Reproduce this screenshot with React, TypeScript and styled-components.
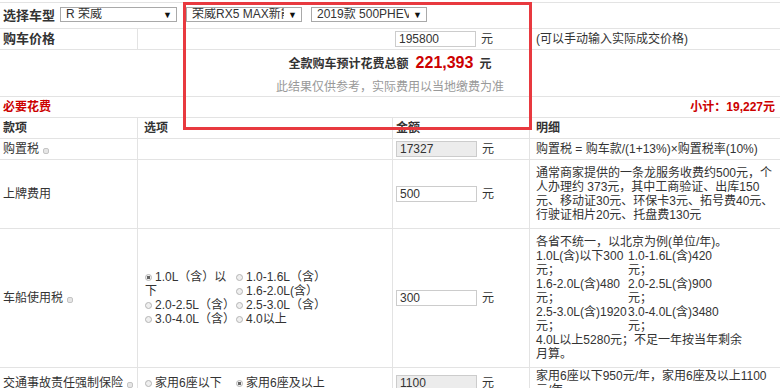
import * as React from "react";
import styled, { createGlobalStyle } from "styled-components";

const GlobalStyle = createGlobalStyle`
  html, body {
    margin: 0;
    padding: 0;
    background: #fff;
  }
  body {
    font-family: "Liberation Sans", "Noto Sans CJK SC", sans-serif;
    font-size: 12px;
    color: #333;
  }
  * {
    box-sizing: border-box;
  }
`;

const LINE = "#e3e3e3";

const Page = styled.div`
  position: relative;
  width: 780px;
  padding-top: 2px;
  overflow: hidden;
`;

const Row = styled.div<{ $height?: number; $top?: boolean }>`
  display: grid;
  grid-template-columns: 137px 255px 137px 1fr;
  border-bottom: 1px solid ${LINE};
  border-top: ${({ $top }) => ($top ? `1px solid ${LINE}` : "none")};
  height: ${({ $height }) => ($height ? `${$height}px` : "auto")};
`;

const Cell = styled.div<{ $line?: boolean; $pad?: number; $span?: boolean }>`
  display: flex;
  align-items: center;
  padding-left: ${({ $pad }) => ($pad !== undefined ? $pad : 3)}px;
  border-left: ${({ $line }) => ($line ? `1px solid ${LINE}` : "none")};
  grid-column: ${({ $span }) => ($span ? "1 / -1" : "auto")};
  line-height: 14px;
  min-width: 0;
`;

const Label = styled.span<{ $size?: number; $red?: boolean }>`
  font-weight: bold;
  font-size: ${({ $size }) => $size || 12}px;
  color: ${({ $red }) => ($red ? "#c00" : "#333")};
`;

const SelectRow = styled.div`
  display: flex;
  align-items: center;
  gap: 9px;
  margin-left: 5px;
`;

const SelectBox = styled.div<{ $width: number }>`
  display: flex;
  align-items: center;
  width: ${({ $width }) => $width}px;
  height: 15px;
  margin-bottom: 2px;
  border: 1px solid #a9a9a9;
  background: #fff;
  padding: 0 4px 0 5px;
  font-size: 12px;
  color: #333;
  white-space: nowrap;
`;

const SelectText = styled.span`
  flex: 1;
  min-width: 0;
  overflow: hidden;
  line-height: 13px;
`;

const Arrow = styled.span`
  flex: none;
  font-size: 9px;
  color: #111;
  margin-left: 4px;
  line-height: 10px;
`;

const Input = styled.input<{ $readOnly?: boolean }>`
  width: 81px;
  height: 16px;
  border: 1px solid #ccc;
  padding: 0 0 0 3px;
  font-family: "Liberation Sans", "Noto Sans CJK SC", sans-serif;
  font-size: 12px;
  color: #333;
  background: ${({ $readOnly }) => ($readOnly ? "#ececec" : "#fff")};
  outline: none;
`;

const Unit = styled.span`
  margin-left: 5px;
`;

const Summary = styled.div`
  grid-column: 1 / -1;
  display: flex;
  flex-direction: column;
  align-items: center;
  padding-top: 4px;
`;

const TotalLine = styled.div`
  display: flex;
  align-items: baseline;
  font-weight: bold;
  height: 22px;
`;

const TotalValue = styled.span`
  color: #c00;
  font-size: 16px;
  margin: 0 6px 0 7px;
`;

const Hint = styled.div`
  color: #999;
  margin-top: 1px;
`;

const Subtotal = styled.span`
  margin-left: auto;
  margin-right: 5px;
  color: #c00;
  font-weight: bold;
`;

const Info = styled.span`
  display: inline-block;
  width: 6px;
  height: 6px;
  margin-left: 4px;
  margin-top: 3px;
  border-radius: 2px;
  border: 1px solid #c4c4c4;
  background: #e6e6e6;
`;

const Options = styled.div`
  display: grid;
  grid-template-columns: 91px 91px;
  line-height: 14px;
`;

const Option = styled.div<{ $tall?: boolean }>`
  grid-row: ${({ $tall }) => ($tall ? "span 2" : "auto")};
`;

const Radio = styled.span<{ $checked?: boolean }>`
  display: inline-block;
  width: 7px;
  height: 7px;
  margin-right: 3px;
  border-radius: 50%;
  border: 1px solid #b5b5b5;
  background: ${({ $checked }) =>
    $checked
      ? "radial-gradient(circle, #666 0 1.6px, #f2f2f2 2px)"
      : "#efefef"};
`;

const Detail = styled.div`
  line-height: 14px;
  white-space: nowrap;
`;

const DetailGrid = styled.div`
  display: grid;
  grid-template-columns: 92px 92px;
`;

const RedBox = styled.div`
  position: absolute;
  left: 183px;
  top: 2px;
  width: 349px;
  height: 128px;
  border: 3px solid #e8393f;
  pointer-events: none;
`;

const taxOptions = [
  { text: "1.0L（含）以下", checked: true, tall: true },
  { text: "1.0-1.6L（含）" },
  { text: "1.6-2.0L(含）" },
  { text: "2.0-2.5L（含）" },
  { text: "2.5-3.0L（含）" },
  { text: "3.0-4.0L（含）" },
  { text: "4.0以上" },
];

const taxDetail = [
  ["1.0L(含)以下300", "1.0-1.6L(含)420"],
  ["1.6-2.0L(含)480", "2.0-2.5L(含)900"],
  ["2.5-3.0L(含)1920", "3.0-4.0L(含)3480"],
];

export default function App() {
  return (
    <Page>
      <GlobalStyle />
      <Row $height={27} $top>
        <Cell $span>
          <Label $size={13}>选择车型</Label>
          <SelectRow>
            <SelectBox $width={117}>
              <SelectText>R 荣威</SelectText>
              <Arrow>▼</Arrow>
            </SelectBox>
            <SelectBox $width={116}>
              <SelectText>荣威RX5 MAX新能源</SelectText>
              <Arrow>▼</Arrow>
            </SelectBox>
            <SelectBox $width={116}>
              <SelectText>2019款 500PHEV 智尊版</SelectText>
              <Arrow>▼</Arrow>
            </SelectBox>
          </SelectRow>
        </Cell>
      </Row>
      <Row $height={21}>
        <Cell>
          <Label $size={13}>购车价格</Label>
        </Cell>
        <Cell $line />
        <Cell $pad={3}>
          <Input defaultValue="195800" />
          <Unit>元</Unit>
        </Cell>
        <Cell $pad={7}>(可以手动输入实际成交价格)</Cell>
      </Row>
      <Row $height={47}>
        <Summary>
          <TotalLine>
            <span>全款购车预计花费总额</span>
            <TotalValue>221,393</TotalValue>
            <span>元</span>
          </TotalLine>
          <Hint>此结果仅供参考，实际费用以当地缴费为准</Hint>
        </Summary>
      </Row>
      <Row $height={21}>
        <Cell $span>
          <Label $red>必要花费</Label>
          <Subtotal>小计：19,227元</Subtotal>
        </Cell>
      </Row>
      <Row $height={21}>
        <Cell>
          <Label>款项</Label>
        </Cell>
        <Cell $line $pad={6}>
          <Label>选项</Label>
        </Cell>
        <Cell $line $pad={3}>
          <Label>金额</Label>
        </Cell>
        <Cell $line $pad={6}>
          <Label>明细</Label>
        </Cell>
      </Row>
      <Row $height={21}>
        <Cell>
          购置税
          <Info />
        </Cell>
        <Cell $line />
        <Cell $line $pad={3}>
          <Input $readOnly readOnly defaultValue="17327" />
          <Unit>元</Unit>
        </Cell>
        <Cell $line $pad={6}>
          购置税 = 购车款/(1+13%)×购置税率(10%)
        </Cell>
      </Row>
      <Row $height={69}>
        <Cell>上牌费用</Cell>
        <Cell $line />
        <Cell $line $pad={3}>
          <Input defaultValue="500" />
          <Unit>元</Unit>
        </Cell>
        <Cell $line $pad={6}>
          <Detail>
            通常商家提供的一条龙服务收费约500元，个
            <br />
            人办理约 373元，其中工商验证、出库150
            <br />
            元、移动证30元、环保卡3元、拓号费40元、
            <br />
            行驶证相片20元、托盘费130元
          </Detail>
        </Cell>
      </Row>
      <Row $height={139}>
        <Cell>
          车船使用税
          <Info />
        </Cell>
        <Cell $line $pad={7}>
          <Options>
            {taxOptions.map((o) => (
              <Option key={o.text} $tall={o.tall}>
                <Radio $checked={o.checked} />
                {o.text}
              </Option>
            ))}
          </Options>
        </Cell>
        <Cell $line $pad={3}>
          <Input defaultValue="300" />
          <Unit>元</Unit>
        </Cell>
        <Cell $line $pad={6}>
          <Detail>
            各省不统一，以北京为例(单位/年)。
            <DetailGrid>
              {taxDetail.map((pair) =>
                pair.map((t) => (
                  <div key={t}>
                    {t}
                    <br />
                    元；
                  </div>
                ))
              )}
            </DetailGrid>
            4.0L以上5280元；不足一年按当年剩余
            <br />
            月算。
          </Detail>
        </Cell>
      </Row>
      <Row $height={31}>
        <Cell>
          交通事故责任强制保险
          <Info />
        </Cell>
        <Cell $line $pad={7}>
          <Options>
            <Option>
              <Radio />
              家用6座以下
            </Option>
            <Option>
              <Radio $checked />
              家用6座及以上
            </Option>
          </Options>
        </Cell>
        <Cell $line $pad={3}>
          <Input $readOnly readOnly defaultValue="1100" />
          <Unit>元</Unit>
        </Cell>
        <Cell $line $pad={6}>
          <Detail>
            家用6座以下950元/年，家用6座及以上1100
            <br />
            元/年
          </Detail>
        </Cell>
      </Row>
      <RedBox />
    </Page>
  );
}
